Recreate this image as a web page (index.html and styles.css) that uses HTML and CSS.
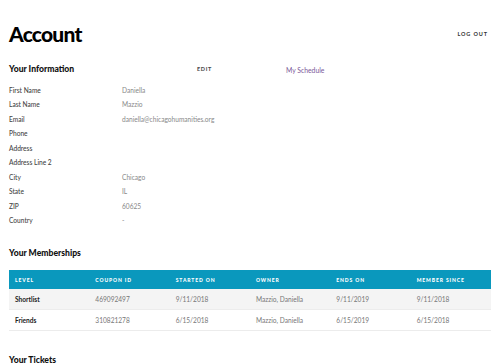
FILE: index.html
```html
<!DOCTYPE html>
<html lang="en">
<head>
    <meta charset="UTF-8">
    <meta name="viewport" content="width=device-width, initial-scale=1.0">
    <title>Account</title>
    <link rel="stylesheet" href="styles.css">
</head>
<body>
    <div class="page">
        <!-- Шапка -->
        <header class="top">
            <h1>Account</h1>
            <a href="#" class="logout">Log out</a>
        </header>

        <!-- Информация -->
        <section class="info-wrap">
            <div class="info-main">
                <div class="info-head">
                    <h2>Your Information</h2>
                    <a href="#" class="edit">Edit</a>
                </div>
                <dl class="info-list">
                    <div class="info-row"><dt>First Name</dt><dd>Daniella</dd></div>
                    <div class="info-row"><dt>Last Name</dt><dd>Mazzio</dd></div>
                    <div class="info-row"><dt>Email</dt><dd>daniella@chicagohumanities.org</dd></div>
                    <div class="info-row"><dt>Phone</dt><dd></dd></div>
                    <div class="info-row"><dt>Address</dt><dd></dd></div>
                    <div class="info-row"><dt>Address Line 2</dt><dd></dd></div>
                    <div class="info-row"><dt>City</dt><dd>Chicago</dd></div>
                    <div class="info-row"><dt>State</dt><dd>IL</dd></div>
                    <div class="info-row"><dt>ZIP</dt><dd>60625</dd></div>
                    <div class="info-row"><dt>Country</dt><dd>-</dd></div>
                </dl>
            </div>
            <a href="#" class="schedule">My Schedule</a>
        </section>

        <!-- Членства -->
        <h2 class="section-title">Your Memberships</h2>
        <table class="members">
            <thead>
                <tr>
                    <th>Level</th>
                    <th>Coupon ID</th>
                    <th>Started On</th>
                    <th>Owner</th>
                    <th>Ends On</th>
                    <th>Member Since</th>
                </tr>
            </thead>
            <tbody>
                <tr>
                    <td class="level">Shortlist</td>
                    <td>469092497</td>
                    <td>9/11/2018</td>
                    <td>Mazzio, Daniella</td>
                    <td>9/11/2019</td>
                    <td>9/11/2018</td>
                </tr>
                <tr>
                    <td class="level">Friends</td>
                    <td>310821278</td>
                    <td>6/15/2018</td>
                    <td>Mazzio, Daniella</td>
                    <td>6/15/2019</td>
                    <td>6/15/2018</td>
                </tr>
            </tbody>
        </table>

        <h2 class="section-title tickets">Your Tickets</h2>
    </div>
</body>
</html>
```

FILE: styles.css
```css
body {
    margin: 0;
    padding: 0;
    font-family: Lato, "Liberation Sans", Arial, sans-serif;
    color: #333;
    background: #fff;
}

a {
    text-decoration: none;
}

.page {
    padding: 0 9px;
}

/* Шапка */
.top {
    display: flex;
    justify-content: space-between;
    align-items: center;
    padding-top: 22px;
    height: 23px;
}

h1 {
    margin: 0;
    font-size: 21px;
    line-height: 23px;
    font-weight: 900;
    color: #000;
    letter-spacing: -0.8px;
}

.logout {
    font-size: 5.5px;
    font-weight: 700;
    letter-spacing: 0.9px;
    text-transform: uppercase;
    color: #333;
    margin-right: 3px;
}

/* Информация */
.info-wrap {
    display: flex;
    margin-top: 18px;
}

.info-main {
    width: 203px;
}

.info-head {
    display: flex;
    justify-content: space-between;
    align-items: center;
    height: 12px;
}

h2 {
    margin: 0;
    font-size: 8.6px;
    line-height: 12px;
    font-weight: 900;
    color: #111;
}

.edit {
    font-size: 5.5px;
    font-weight: 700;
    letter-spacing: 0.7px;
    text-transform: uppercase;
    color: #444;
}

.schedule {
    margin-left: 74px;
    margin-top: 1px;
    font-size: 6.8px;
    line-height: 12px;
    color: #7a5797;
}

.info-list {
    margin: 8px 0 0;
}

.info-row {
    display: flex;
    height: 14.45px;
    line-height: 14.45px;
    font-size: 6.6px;
}

.info-row dt {
    width: 113px;
    flex-shrink: 0;
    color: #444;
    font-weight: 500;
}

.info-row dd {
    margin: 0;
    color: #888;
    white-space: nowrap;
}

.section-title {
    margin-top: 20px;
}

/* Таблица */
.members {
    width: 482px;
    margin-top: 11px;
    border-collapse: collapse;
    table-layout: fixed;
    font-size: 6.6px;
}

.members th {
    background: #0a98bd;
    color: #fff;
    height: 19px;
    padding: 0 0 0 6px;
    text-align: left;
    font-size: 5px;
    font-weight: 900;
    letter-spacing: 0.9px;
    text-transform: uppercase;
}

.members td {
    height: 20px;
    padding: 0 0 0 6px;
    color: #777;
    border-bottom: 1px solid #ececec;
}

.members tbody tr:nth-child(odd) td {
    background: #f4f4f4;
}

.members .level {
    color: #222;
    font-weight: 700;
}

.tickets {
    margin-top: 23px;
}
```
